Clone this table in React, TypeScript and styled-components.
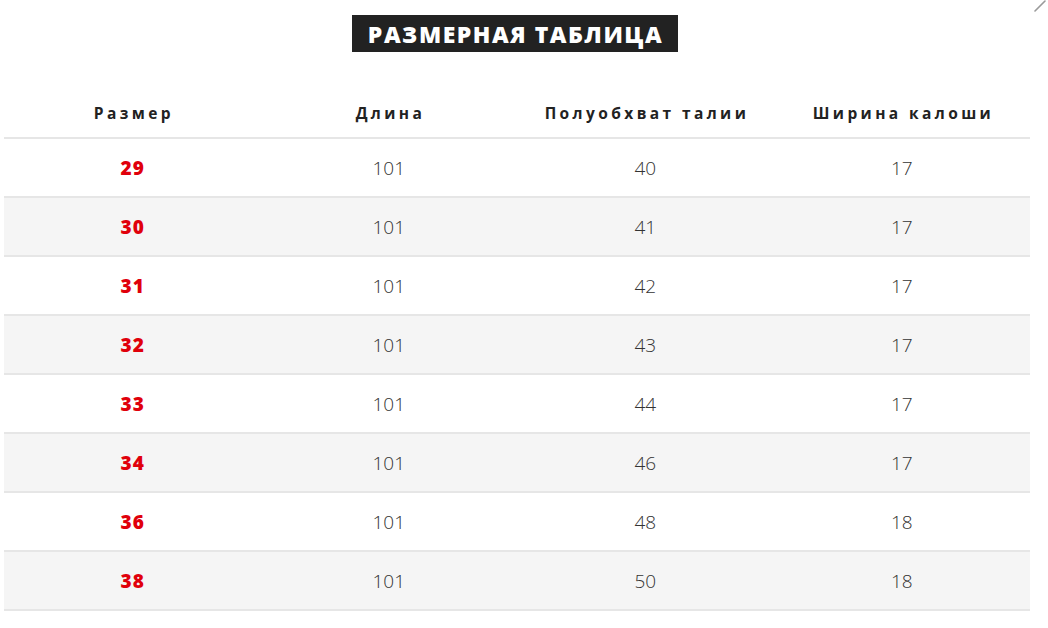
import React from "react";
import styled, { createGlobalStyle } from "styled-components";

const GlobalStyle = createGlobalStyle`
  html, body {
    margin: 0;
    padding: 0;
    background: #ffffff;
  }
  body {
    font-family: "Open Sans", "DejaVu Sans", sans-serif;
    color: #222;
  }
`;

const Page = styled.div`
  position: relative;
  width: 1048px;
  height: 628px;
  overflow: hidden;
  padding: 15px 18px 0 4px;
  box-sizing: border-box;
`;

const TitleRow = styled.div`
  display: flex;
  justify-content: center;
  padding-right: 4px;
`;

const Title = styled.h2`
  margin: 0;
  height: 37px;
  padding: 0 15px 0 16px;
  display: flex;
  align-items: center;
  background: #222222;
  color: #ffffff;
  font-size: 23px;
  font-weight: 800;
  letter-spacing: 1.5px;
`;

const EditMark = styled.svg`
  position: absolute;
  top: 0;
  right: 0;
`;

const Table = styled.table`
  width: 1026px;
  margin-top: 36px;
  border-collapse: collapse;
  table-layout: fixed;
`;

const HeadCell = styled.th`
  height: 49px;
  padding: 0 0 0 3.4px;
  font-size: 15.5px;
  font-weight: 700;
  letter-spacing: 3.4px;
  color: #222;
  text-align: center;
  vertical-align: middle;
  border-bottom: 2px solid #e6e6e6;
`;

const Row = styled.tr<{ $shaded: boolean }>`
  background: ${({ $shaded }) => ($shaded ? "#f5f5f5" : "#ffffff")};
  border-bottom: 2px solid #e6e6e6;
`;

const Cell = styled.td<{ $accent?: boolean }>`
  height: 57px;
  padding: ${({ $accent }) => ($accent ? "0 0 0 1px" : "0")};
  text-align: center;
  vertical-align: middle;
  font-size: 19px;
  letter-spacing: ${({ $accent }) => ($accent ? "1px" : "0")};
  font-weight: ${({ $accent }) => ($accent ? 800 : 300)};
  color: ${({ $accent }) => ($accent ? "#e0000b" : "#333333")};
`;

const headers = ["Размер", "Длина", "Полуобхват талии", "Ширина калоши"];

const rows = [
  ["29", "101", "40", "17"],
  ["30", "101", "41", "17"],
  ["31", "101", "42", "17"],
  ["32", "101", "43", "17"],
  ["33", "101", "44", "17"],
  ["34", "101", "46", "17"],
  ["36", "101", "48", "18"],
  ["38", "101", "50", "18"],
];

const App: React.FC = () => {
  return (
    <>
      <GlobalStyle />
      <Page>
        <EditMark width="16" height="12" viewBox="0 0 16 12">
          <path d="M3 11 L13 1" stroke="#9a9a9a" strokeWidth="1.6" strokeLinecap="round" />
        </EditMark>
        <TitleRow>
          <Title>РАЗМЕРНАЯ ТАБЛИЦА</Title>
        </TitleRow>
        <Table>
          <thead>
            <tr>
              {headers.map((h) => (
                <HeadCell key={h}>{h}</HeadCell>
              ))}
            </tr>
          </thead>
          <tbody>
            {rows.map((r, i) => (
              <Row key={r[0]} $shaded={i % 2 === 1}>
                {r.map((v, j) => (
                  <Cell key={j} $accent={j === 0}>
                    {v}
                  </Cell>
                ))}
              </Row>
            ))}
          </tbody>
        </Table>
      </Page>
    </>
  );
};

export default App;
